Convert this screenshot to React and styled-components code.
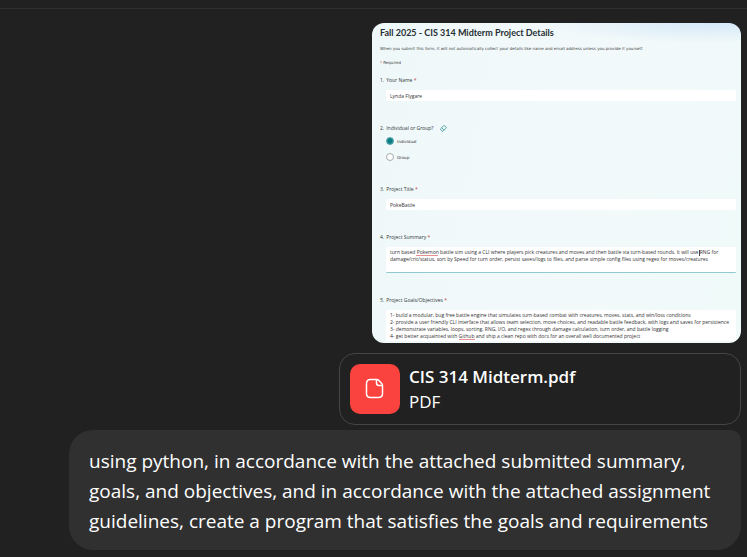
import React from "react";
import styled, { createGlobalStyle } from "styled-components";

const GlobalStyle = createGlobalStyle`
  *, *::before, *::after { box-sizing: border-box; }
  body {
    margin: 0;
    background: #212121;
    color: #fff;
    font-family: "Open Sans", "Noto Sans", sans-serif;
  }
`;

const Chat = styled.main`
  display: flex;
  flex-direction: column;
`;

const TopBar = styled.header`
  height: 9px;
  border-bottom: 1px solid #2e2e2e;
`;

const Message = styled.section`
  display: flex;
  flex-direction: column;
  align-items: flex-end;
  padding: 14px 6px 7px;
`;

const FormPreview = styled.form`
  width: 50%;
  min-width: 369px;
  height: 320px;
  overflow: hidden;
  padding: 0 5px 0 8px;
  border-radius: 12px;
  color: #333;
  background:
    radial-gradient(ellipse 170px 20px at 92% 0, #d6e8f8 0%, #d6e8f800 100%),
    linear-gradient(100deg, #eff8f9 0%, #f2f9fa 50%, #f0faf9 100%);
  font-size: 5px;
  line-height: 7px;
`;

const FormTitle = styled.h1`
  margin: 4px 0 0;
  color: #262f33;
  font-family: Lato, "Open Sans", sans-serif;
  font-size: 9px;
  font-weight: 700;
  line-height: 12px;
`;

const Note = styled.p`
  margin: ${({ $gap }) => $gap}px 0 0;
  color: #444;
  font-family: "DejaVu Sans", sans-serif;
  font-size: 4px;
  line-height: 7px;
  white-space: nowrap;
`;

const Star = styled.span`
  color: #c4393f;
`;

const Question = styled.div`
  margin: ${({ $gap }) => $gap}px 0 0;
`;

const ChoiceQuestion = styled.fieldset`
  margin: 23px 0 0;
  padding: 0;
  border: 0;
  min-width: 0;
`;

const Prompt = styled.label`
  display: flex;
  align-items: center;
  height: 8px;
  gap: 2px;
  color: #30383b;
`;

const Legend = styled.legend`
  display: flex;
  align-items: center;
  height: 8px;
  gap: 2px;
  padding: 0;
  color: #30383b;
`;

const EraseButton = styled.button`
  display: flex;
  margin-left: 4px;
  padding: 0;
  border: 0;
  background: none;
  color: #16878a;
`;

const TextField = styled.input`
  display: block;
  width: calc(100% - 6px);
  height: 11px;
  margin: 6px 0 0 6px;
  padding: 0 4px;
  border: 0;
  border-radius: 1px;
  background: #fff;
  color: #333;
  font: inherit;
  outline: 0;
`;

const AreaBox = styled.div`
  position: relative;
  margin: 6px 0 0 6px;
`;

const TextArea = styled.textarea`
  display: block;
  width: 100%;
  height: ${({ $height }) => $height}px;
  padding: 2px 0 0 4px;
  border: 0;
  border-bottom: ${({ $active }) => ($active ? "1px solid #8fcacd" : "0")};
  border-radius: 1px;
  background: #fff;
  color: #333;
  font: inherit;
  outline: 0;
  resize: none;
  overflow: hidden;
  white-space: pre;
`;

const Squiggle = styled.span`
  position: absolute;
  top: ${({ $top }) => $top}px;
  left: ${({ $left }) => $left}px;
  width: ${({ $width }) => $width}px;
  height: 1px;
  background: #e58f90;
`;

const Caret = styled.span`
  position: absolute;
  top: 3px;
  left: 313px;
  width: 1px;
  height: 6px;
  background: #444;
`;

const Option = styled.label`
  display: flex;
  align-items: center;
  gap: 3px;
  height: 8px;
  margin: ${({ $gap }) => $gap}px 0 0 6px;
  font-family: "DejaVu Sans", sans-serif;
  font-size: 4px;
`;

const Radio = styled.input`
  appearance: none;
  width: 8px;
  height: 8px;
  margin: 0;
  border: 1px solid #a3abac;
  border-radius: 50%;
  background: #fff;

  &:checked {
    border-color: #4d9ea3;
    background: radial-gradient(circle, #087d84 2px, #5caab0 4px);
  }
`;

const FileCard = styled.button`
  display: flex;
  align-items: center;
  gap: 9px;
  width: 402px;
  max-width: 100%;
  height: 72px;
  margin-top: 10px;
  padding: 0 10px;
  border: 1px solid #454545;
  border-radius: 16px;
  background: #212121;
  color: #fff;
  font: inherit;
  text-align: left;
`;

const FileBadge = styled.span`
  display: grid;
  place-items: center;
  flex: none;
  width: 50px;
  height: 50px;
  border-radius: 10px;
  background: #fa423e;
`;

const FileText = styled.span`
  display: flex;
  flex-direction: column;
  font-size: 17px;
  line-height: 25px;
`;

const FileName = styled.strong`
  font-weight: 600;
`;

const Bubble = styled.p`
  width: 100%;
  max-width: 672px;
  margin: 5px 0 0;
  padding: 16px 20px 14px;
  border-radius: 24px 10px 24px 24px;
  background: #303030;
  font-size: 19px;
  line-height: 30px;
`;

function FileIcon() {
  return (
    <svg width="20" height="22" viewBox="0 0 20 22" fill="none" stroke="#fff" strokeWidth="1.5" strokeLinejoin="round" aria-hidden="true">
      <path d="M11.5 1.5H5.5Q1.5 1.5 1.5 5.5V15.5Q1.5 19.5 5.5 19.5H13.5Q17.5 19.5 17.5 15.5V7.5C17.5 6.5 17.2 5.9 16.5 5.2L13.9 2.5C13.2 1.8 12.5 1.5 11.5 1.5Z" />
      <path d="M11.5 1.5V5Q11.5 7.5 14 7.5H17.5" />
    </svg>
  );
}

function EraserIcon() {
  return (
    <svg width="7" height="7" viewBox="0 0 7 7" fill="none" stroke="currentColor" strokeWidth=".7" strokeLinejoin="round" aria-hidden="true">
      <path d="M.6 3.8 3.8.7Q4.2.4 4.6.7L6.2 2.3Q6.5 2.7 6.2 3L3 6.2H2.2L.6 4.6Q.3 4.2.6 3.8ZM1.8 2.8 4.1 5.1" />
    </svg>
  );
}

const SUMMARY = `turn based Pokemon battle sim using a CLI where players pick creatures and moves and then battle via turn-based rounds. It will use RNG for
damage/crit/status, sort by Speed for turn order, persist saves/logs to files, and parse simple config files using regex for moves/creatures`;

const GOALS = `1- build a modular, bug free battle engine that simulates turn-based combat with creatures, moves, stats, and win/loss conditions
2- provide a user friendly CLI interface that allows team selection, move choices, and readable battle feedback, with logs and saves for persistence
3- demonstrate variables, loops, sorting, RNG, I/O, and regex through damage calculation, turn order, and battle logging
4- get better acquainted with Github and ship a clean repo with docs for an overall well documented project`;

function PromptLabel({ number, text, htmlFor }) {
  return (
    <Prompt htmlFor={htmlFor}>
      <span>{number}.</span>
      <span>{text} <Star>*</Star></span>
    </Prompt>
  );
}

export default function App() {
  return (
    <>
      <GlobalStyle />
      <Chat>
        <TopBar />
        <Message>
          <FormPreview>
            <FormTitle>Fall 2025 - CIS 314 Midterm Project Details</FormTitle>
            <Note $gap={6}>
              When you submit this form, it will not automatically collect your details like name and email address unless you provide it yourself.
            </Note>
            <Note $gap={7}><Star>*</Star> Required</Note>
            <Question $gap={10}>
              <PromptLabel number={1} text="Your Name" htmlFor="name" />
              <TextField id="name" defaultValue="Lynda Flygare" />
            </Question>
            <ChoiceQuestion>
              <Legend>
                <span>2.</span>
                <span>Individual or Group?</span>
                <EraseButton type="button" aria-label="Clear selection"><EraserIcon /></EraseButton>
              </Legend>
              <Option $gap={5}>
                <Radio type="radio" name="kind" defaultChecked />
                Individual
              </Option>
              <Option $gap={8}>
                <Radio type="radio" name="kind" />
                Group
              </Option>
            </ChoiceQuestion>
            <Question $gap={24}>
              <PromptLabel number={3} text="Project Title" htmlFor="title" />
              <TextField id="title" defaultValue="PokeBattle" />
            </Question>
            <Question $gap={23}>
              <PromptLabel number={4} text="Project Summary" htmlFor="summary" />
              <AreaBox>
                <TextArea id="summary" $height={26} $active spellCheck={false} defaultValue={SUMMARY} />
                <Squiggle $top={8} $left={30} $width={22} />
                <Caret />
              </AreaBox>
            </Question>
            <Question $gap={23}>
              <PromptLabel number={5} text="Project Goals/Objectives" htmlFor="goals" />
              <AreaBox>
                <TextArea id="goals" $height={31} spellCheck={false} defaultValue={GOALS} />
                <Squiggle $top={29} $left={73} $width={16} />
              </AreaBox>
            </Question>
          </FormPreview>
          <FileCard type="button">
            <FileBadge><FileIcon /></FileBadge>
            <FileText>
              <FileName>CIS 314 Midterm.pdf</FileName>
              <span>PDF</span>
            </FileText>
          </FileCard>
          <Bubble>
            using python, in accordance with the attached submitted summary, goals, and objectives, and in accordance with the attached assignment guidelines, create a program that satisfies the goals and requirements
          </Bubble>
        </Message>
      </Chat>
    </>
  );
}
